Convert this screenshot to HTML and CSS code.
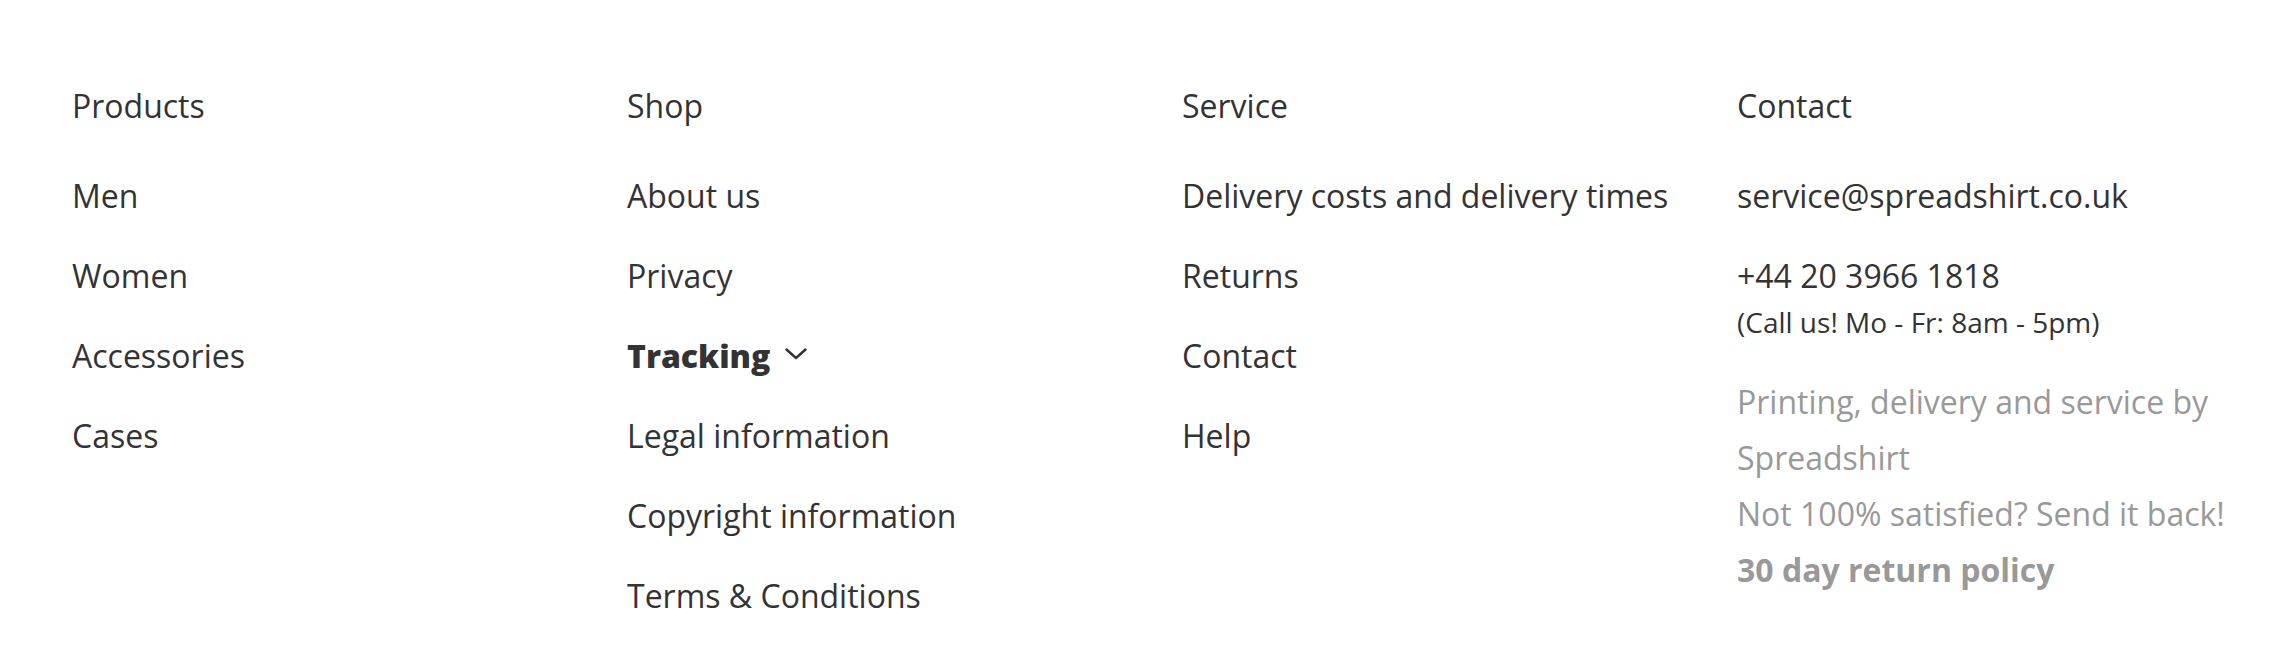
FILE: index.html
```html
<!DOCTYPE html>
<html lang="en">
<head>
<meta charset="utf-8">
<title>Footer</title>
<link rel="stylesheet" href="styles.css">
</head>
<body>
<footer class="footer">
  <div class="col">
    <h3 class="col-title">Products</h3>
    <ul class="links">
      <li><a href="#">Men</a></li>
      <li><a href="#">Women</a></li>
      <li><a href="#">Accessories</a></li>
      <li><a href="#">Cases</a></li>
    </ul>
  </div>
  <div class="col">
    <h3 class="col-title">Shop</h3>
    <ul class="links">
      <li><a href="#">About us</a></li>
      <li><a href="#">Privacy</a></li>
      <li><a href="#" class="tracking">Tracking<svg class="chev" width="22" height="12" viewBox="0 0 22 12"><path d="M1.5 1.5 L11 10 L20.5 1.5" fill="none" stroke="#333" stroke-width="2.4" stroke-linecap="round" stroke-linejoin="round"/></svg></a></li>
      <li><a href="#">Legal information</a></li>
      <li><a href="#">Copyright information</a></li>
      <li><a href="#">Terms &amp; Conditions</a></li>
    </ul>
  </div>
  <div class="col">
    <h3 class="col-title">Service</h3>
    <ul class="links">
      <li><a href="#">Delivery costs and delivery times</a></li>
      <li><a href="#">Returns</a></li>
      <li><a href="#">Contact</a></li>
      <li><a href="#">Help</a></li>
    </ul>
  </div>
  <div class="col">
    <h3 class="col-title">Contact</h3>
    <ul class="links">
      <li><a href="#">service@spreadshirt.co.uk</a></li>
      <li class="phone"><a href="#">+44 20 3966 1818</a><span class="hours">(Call us! Mo - Fr: 8am - 5pm)</span></li>
    </ul>
    <p class="note">Printing, delivery and service by Spreadshirt<br>Not 100% satisfied? Send it back!<br><strong>30 day return policy</strong></p>
  </div>
</footer>
</body>
</html>
```
FILE: styles.css
```css
html, body {
  margin: 0;
  padding: 0;
  background: #fff;
}
body {
  font-family: "Open Sans", "Liberation Sans", sans-serif;
  color: #333;
}
.footer {
  display: grid;
  grid-template-columns: 555px 555px 555px 1fr;
  padding: 84px 0 0 72px;
}
.col {
  display: flex;
  flex-direction: column;
}
.col-title {
  margin: 0;
  font-size: 32px;
  line-height: 44px;
  font-weight: 400;
  color: #333;
}
.links {
  list-style: none;
  margin: 48px 0 0;
  padding: 0;
  display: flex;
  flex-direction: column;
  gap: 40px;
}
.links li {
  font-size: 32px;
  line-height: 40px;
}
.links a {
  color: #333;
  text-decoration: none;
}
.tracking {
  font-weight: 800;
  display: inline-flex;
  align-items: center;
  gap: 15px;
}
.chev {
  display: block;
  margin-top: -4px;
}
.phone {
  display: flex;
  flex-direction: column;
}
.hours {
  font-size: 28px;
  line-height: 44px;
  padding-top: 4px;
}
.note {
  margin: 30px 0 0;
  font-size: 32px;
  line-height: 56px;
  color: #999;
}
.note strong {
  font-weight: 700;
}
```
